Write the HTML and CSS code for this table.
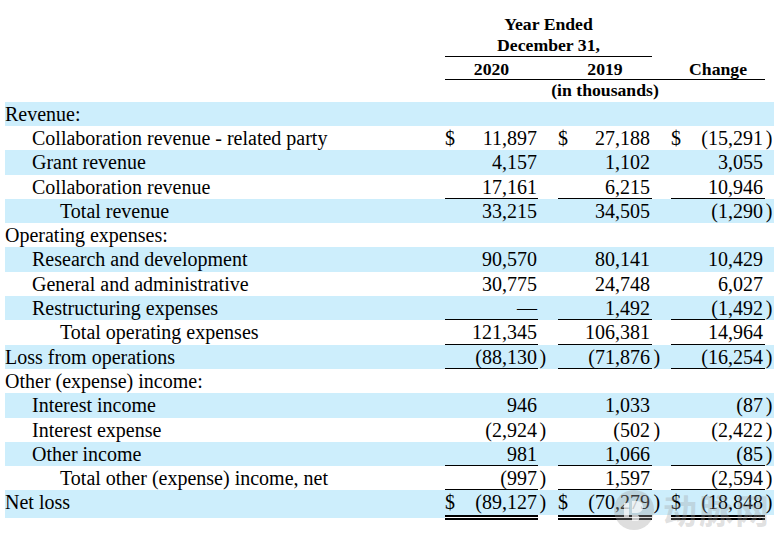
FILE: index.html
```html
<!DOCTYPE html>
<html lang="en">
<head>
<meta charset="utf-8">
<title>Results of Operations</title>
<link rel="stylesheet" href="styles.css">
</head>
<body>
<div class="page">
<table class="fin">
<colgroup>
<col class="c-label"><col class="c-amt1"><col class="c-par1"><col class="c-amt2"><col class="c-par2"><col class="c-amt3"><col class="c-par3">
</colgroup>
<thead>
<tr class="h1"><td></td><th colspan="3" class="rule">Year Ended<br>December 31,</th><td></td><td></td><td></td></tr>
<tr class="h2"><td></td><th class="rule">2020</th><th class="rule"></th><th class="rule">2019</th><th class="rule"></th><th class="rule">Change</th><td></td></tr>
<tr class="h3"><td></td><th colspan="5">(in thousands)</th><td></td></tr>
</thead>
<tbody>
<tr class="band"><td class="lbl">Revenue:</td><td></td><td></td><td></td><td></td><td></td><td></td></tr>
<tr><td class="lbl l1">Collaboration revenue - related party</td><td class="amt a1"><span class="cur">$</span>11,897</td><td class="par"></td><td class="amt a2"><span class="cur">$</span>27,188</td><td class="par"></td><td class="amt a3"><span class="cur">$</span>(15,291</td><td class="par p3">)</td></tr>
<tr class="band"><td class="lbl l1">Grant revenue</td><td class="amt a1">4,157</td><td class="par"></td><td class="amt a2">1,102</td><td class="par"></td><td class="amt a3">3,055</td><td class="par p3"></td></tr>
<tr><td class="lbl l1">Collaboration revenue</td><td class="amt a1 ul">17,161</td><td class="par"></td><td class="amt a2 ul">6,215</td><td class="par"></td><td class="amt a3 ul">10,946</td><td class="par p3"></td></tr>
<tr class="band"><td class="lbl l2">Total revenue</td><td class="amt a1">33,215</td><td class="par"></td><td class="amt a2">34,505</td><td class="par"></td><td class="amt a3">(1,290</td><td class="par p3">)</td></tr>
<tr><td class="lbl">Operating expenses:</td><td></td><td></td><td></td><td></td><td></td><td></td></tr>
<tr class="band"><td class="lbl l1">Research and development</td><td class="amt a1">90,570</td><td class="par"></td><td class="amt a2">80,141</td><td class="par"></td><td class="amt a3">10,429</td><td class="par p3"></td></tr>
<tr><td class="lbl l1">General and administrative</td><td class="amt a1">30,775</td><td class="par"></td><td class="amt a2">24,748</td><td class="par"></td><td class="amt a3">6,027</td><td class="par p3"></td></tr>
<tr class="band"><td class="lbl l1">Restructuring expenses</td><td class="amt a1 ul">&mdash;</td><td class="par"></td><td class="amt a2 ul">1,492</td><td class="par"></td><td class="amt a3 ul">(1,492</td><td class="par p3">)</td></tr>
<tr><td class="lbl l2">Total operating expenses</td><td class="amt a1 ul">121,345</td><td class="par"></td><td class="amt a2 ul">106,381</td><td class="par"></td><td class="amt a3 ul">14,964</td><td class="par p3"></td></tr>
<tr class="band"><td class="lbl">Loss from operations</td><td class="amt a1 ul">(88,130</td><td class="par">)</td><td class="amt a2 ul">(71,876</td><td class="par">)</td><td class="amt a3 ul">(16,254</td><td class="par p3">)</td></tr>
<tr><td class="lbl">Other (expense) income:</td><td></td><td></td><td></td><td></td><td></td><td></td></tr>
<tr class="band"><td class="lbl l1">Interest income</td><td class="amt a1">946</td><td class="par"></td><td class="amt a2">1,033</td><td class="par"></td><td class="amt a3">(87</td><td class="par p3">)</td></tr>
<tr><td class="lbl l1">Interest expense</td><td class="amt a1">(2,924</td><td class="par">)</td><td class="amt a2">(502</td><td class="par">)</td><td class="amt a3">(2,422</td><td class="par p3">)</td></tr>
<tr class="band"><td class="lbl l1">Other income</td><td class="amt a1 ul">981</td><td class="par"></td><td class="amt a2 ul">1,066</td><td class="par"></td><td class="amt a3 ul">(85</td><td class="par p3">)</td></tr>
<tr><td class="lbl l2">Total other (expense) income, net</td><td class="amt a1 ul">(997</td><td class="par">)</td><td class="amt a2 ul">1,597</td><td class="par"></td><td class="amt a3 ul">(2,594</td><td class="par p3">)</td></tr>
<tr class="band last"><td class="lbl">Net loss</td><td class="amt a1 dbl"><span class="cur">$</span>(89,127</td><td class="par">)</td><td class="amt a2 dbl"><span class="cur">$</span>(70,279</td><td class="par">)</td><td class="amt a3 dbl"><span class="cur">$</span>(18,848</td><td class="par p3">)</td></tr>
</tbody>
</table>
<div class="watermark">
<svg class="wm-logo" width="42" height="42" viewBox="0 0 42 42">
<circle cx="21" cy="21" r="20" fill="rgba(160,160,160,0.35)"/>
<path d="M11 14 h5 v14 h-5 z M19 12 h5 a6 6 0 0 1 0 12 h-5 z M19 26 h6 a4 4 0 0 1 0 6 h-6 z" fill="rgba(255,255,255,0.7)"/>
</svg>
<span class="wm-text">动脉网</span>
</div>
</div>
</body>
</html>
```

FILE: styles.css
```css
* { box-sizing: border-box; }

body {
  margin: 0;
  background: #ffffff;
  color: #000000;
  font-family: "Liberation Serif", "Times New Roman", serif;
}

.page {
  position: relative;
  width: 780px;
  height: 540px;
  padding: 14px 0 0 5px;
}

.fin {
  border-collapse: separate;
  border-spacing: 0;
  table-layout: fixed;
  width: 769px;
  font-size: 20px;
}

.c-label { width: 440px; }
.c-amt1 { width: 93px; }
.c-par1 { width: 20px; }
.c-amt2 { width: 94px; }
.c-par2 { width: 19px; }
.c-amt3 { width: 94px; }
.c-par3 { width: 9px; }

.fin td, .fin th {
  padding: 0;
  white-space: nowrap;
}

.fin th {
  font-weight: bold;
  font-size: 17.7px;
  text-align: center;
  vertical-align: top;
}

.h1 th, .h1 td { height: 43px; line-height: 21px; }
.h2 th, .h2 td { height: 23px; line-height: 22px; padding-top: 1px; }
.h3 th, .h3 td { height: 21.7px; line-height: 21.7px; }

.rule { box-shadow: inset 0 -1px 0 #000; }

tbody td {
  height: 24.3px;
  line-height: 24.3px;
  vertical-align: top;
}

tbody tr.band td { background: #cdeefc; }

.lbl { text-align: left; }
.l1 { padding-left: 27px !important; }
.l2 { padding-left: 55px !important; }

.amt { text-align: right; }
.a1 { padding-right: 1px !important; }
.a2 { padding-right: 2px !important; }
.a3 { padding-right: 2px !important; }

.cur { float: left; }

.par { text-align: left; padding-left: 1.5px !important; }
.p3 { padding-left: 0.7px !important; }

.ul { box-shadow: inset 0 -1px 0 #000; }

tbody tr.last td {
  height: 29.3px;
  border-bottom: 5px solid transparent;
  background-clip: padding-box;
}

tbody tr.last td.lbl { border-bottom-width: 2.6px; }

tbody tr.last td.dbl {
  border-bottom: 5px double #000;
}

.watermark {
  position: absolute;
  left: 613px;
  top: 489px;
  display: flex;
  align-items: center;
  gap: 8px;
  pointer-events: none;
}

.wm-logo { display: block; }

.wm-text {
  font-family: "Noto Sans CJK SC", sans-serif;
  font-weight: bold;
  font-size: 34px;
  line-height: 40px;
  letter-spacing: 2px;
  color: rgba(160, 160, 160, 0.32);
}
```
